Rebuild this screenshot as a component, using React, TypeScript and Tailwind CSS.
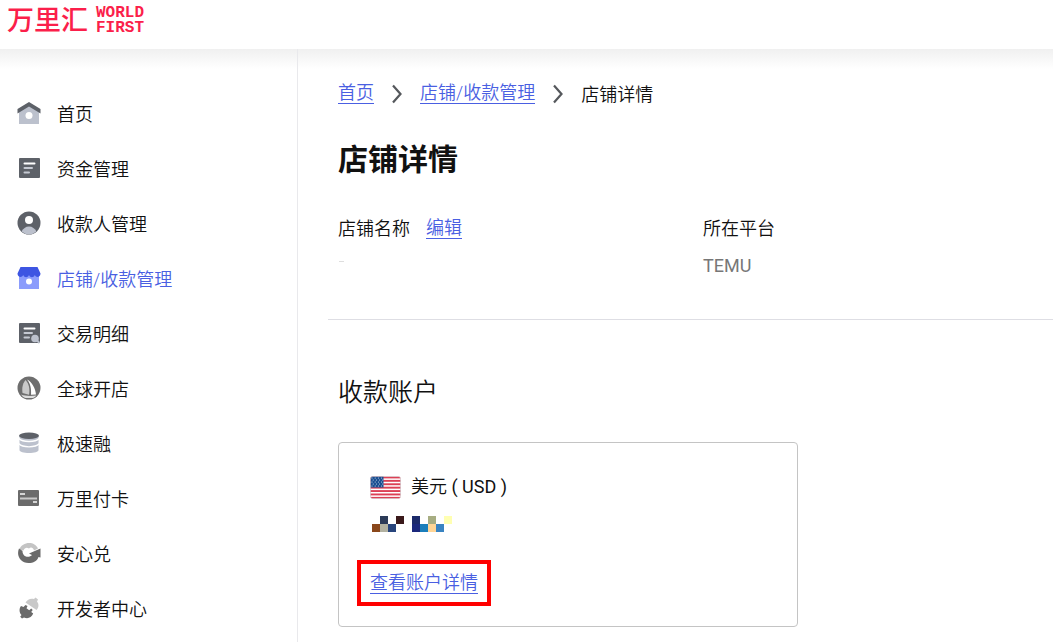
import type { ReactNode } from 'react';

type NavItem = { label: string; icon: ReactNode; active?: boolean };

function Icon({ children }: { children: ReactNode }) {
  return (
    <svg viewBox="0 0 24 24" className="mb-[3px] size-6 shrink-0" aria-hidden="true">
      {children}
    </svg>
  );
}

const navItems: NavItem[] = [
  {
    label: '首页',
    icon: (
      <Icon>
        <path d="M2 9.5 12 3l10 6.500V23H2Z" fill="#bcc1cd" />
        <path d="M12 1 .5 8v4.500L12 5.500l11.500 7V8Z" fill="#5d6168" />
        <circle cx="12" cy="14.500" r="3.500" fill="#fff" />
      </Icon>
    ),
  },
  {
    label: '资金管理',
    icon: (
      <Icon>
        <rect x="2" y="2" width="21" height="20" rx="1" fill="#5d6168" />
        <path d="M7.500 7.500h10" stroke="#fff" strokeWidth="2" strokeLinecap="round" />
        <path d="M7.500 12h7.500M7.500 16.500h4.500" stroke="#c5c9d2" strokeWidth="2" strokeLinecap="round" />
      </Icon>
    ),
  },
  {
    label: '收款人管理',
    icon: (
      <Icon>
        <circle cx="12" cy="12" r="11.500" fill="#5d6168" />
        <path d="M4.500 20.500c1.500-3 4.300-5 7.500-5s6 2 7.500 5a11.500 11.500 0 0 1-15 0Z" fill="#bcc1cd" />
        <circle cx="12" cy="9" r="4" fill="#fff" />
      </Icon>
    ),
  },
  {
    label: '店铺/收款管理',
    active: true,
    icon: (
      <Icon>
        <path d="M2 8h20v15H2Z" fill="#8b9cfc" />
        <path
          d="M3.500 1h17L23.500 7.500c0 4-4.500 4.500-5.700 1.500-1.300 3-4.500 3-5.800 0-1.300 3-4.500 3-5.800 0C5 12 .5 11.500.5 7.500Z"
          fill="#3d55e2"
        />
        <circle cx="12" cy="15.500" r="3" fill="#fff" />
      </Icon>
    ),
  },
  {
    label: '交易明细',
    icon: (
      <Icon>
        <rect x="2" y="2" width="21" height="20" rx="1" fill="#5d6168" />
        <path d="M7.500 7.500h10" stroke="#fff" strokeWidth="2" strokeLinecap="round" />
        <path d="M7.500 12h7.500M7.500 16.500h4.500" stroke="#c5c9d2" strokeWidth="2" strokeLinecap="round" />
        <circle cx="18" cy="17.500" r="3.800" fill="#bcc1cd" />
        <path d="m20 19.500 2.500 2.500" stroke="#bcc1cd" strokeWidth="2" />
      </Icon>
    ),
  },
  {
    label: '全球开店',
    icon: (
      <Icon>
        <circle cx="12" cy="12" r="11.500" fill="#6e6e6e" />
        <path d="M8.500 4C5 8.500 5 13 5.500 17l6.500 1.800C13 13 12 7.500 8.500 4Z" fill="#c9c9c9" />
        <path d="M10 3.500c5 2.500 8.500 9 9 15l-5 .3C14.500 13 13.500 7.500 10 3.500Z" fill="#fff" />
        <path d="M4 18.500c4 1.500 9 1.800 15.500 1-1 1.200-2 2-3.500 2.500H8.500C6.500 21.500 5 20 4 18.500Z" fill="#dcdcdc" />
      </Icon>
    ),
  },
  {
    label: '极速融',
    icon: (
      <Icon>
        <path d="M2.500 5v14c0 1.800 4.200 3 9.500 3s9.500-1.200 9.500-3V5Z" fill="#bcc1cd" />
        <path
          d="M2 7.500c2 2.300 5.500 3 10 3s8-.7 10-3M2 12.800c2 2.300 5.500 3 10 3s8-.7 10-3"
          fill="none"
          stroke="#fff"
          strokeWidth="1.300"
        />
        <ellipse cx="12" cy="4.700" rx="10" ry="3.200" fill="#5d6168" />
      </Icon>
    ),
  },
  {
    label: '万里付卡',
    icon: (
      <Icon>
        <rect x="1" y="4" width="21" height="16" rx="1" fill="#6b6b6b" />
        <path d="M3 8h5M16 16h4" stroke="#d5d5d5" strokeWidth="2" />
        <path d="M3 12.500h17" stroke="#c8c8c8" strokeWidth="2" />
      </Icon>
    ),
  },
  {
    label: '安心兑',
    icon: (
      <Icon>
        <path
          d="M2 9C4 4 8 2 12 2c4 0 7.500 2 9 5.500L17 9.500c-1-3.500-3.500-3.500-5-2-2-1.500-4.500-1-5.500 2Z"
          fill="#c4c4c4"
        />
        <path
          d="M2 7.500C-1 14.500 3.500 22 11.500 22c5 0 8.500-2 10-6l2 .5V7.500L12 12.500l3 1.500C12.500 17 5.500 16.500 5.500 10Z"
          fill="#6a6a6a"
        />
      </Icon>
    ),
  },
  {
    label: '开发者中心',
    icon: (
      <Icon>
        <path
          d="M8.500 6.500C10.500 3 14 2 17 3L18.500 1.500l2.500 2-1 2C22.500 8.500 21.500 12 19.500 14Z"
          fill="#c9c9c9"
        />
        <path
          d="m4 10 2.500 1 2-2 2 1-1 2.200 2.700 2 2-1.700 1.500 1.500-1.500 2 2 1.500c-1.700 4.500-5.700 5.500-9.200 4L5 22.500l-1.800-1.700L4.500 19C2 16.500 2 12.500 4 10Z"
          fill="#6a6a6a"
        />
      </Icon>
    ),
  },
];

const stars = [0, 1, 2, 3, 4].flatMap((row) =>
  [0, 1, 2, 3].map((col) => ({ x: 2 + col * 3.2 + (row % 2) * 1.2, y: 2 + row * 2 })),
);

function UsFlag() {
  return (
    <svg viewBox="0 0 31 23" className="h-[23px] w-[31px] shrink-0" role="img" aria-label="USD">
      <clipPath id="flag">
        <rect x=".5" y=".5" width="30" height="22" rx="2" />
      </clipPath>
      <g clipPath="url(#flag)">
        <rect width="31" height="23" fill="#fff" />
        {[0, 1, 2, 3, 4, 5, 6].map((i) => (
          <rect key={i} y={0.5 + i * 3.4} width="31" height="1.900" fill="#dc4055" />
        ))}
        <rect width="13.500" height="11.500" fill="#1b4f91" />
        {stars.map((s) => (
          <circle key={`${s.x}-${s.y}`} cx={s.x} cy={s.y} r=".55" fill="#d8e4f2" />
        ))}
      </g>
      <rect x=".5" y=".5" width="30" height="22" rx="2" fill="none" stroke="#c9b9bd" strokeWidth=".6" />
    </svg>
  );
}

const mosaic: [number, number, string][] = [
  [1, 0, '#2c3b58'],
  [3, 0, '#3a191b'],
  [0, 1, '#8a471b'],
  [1, 1, '#b2b1a0'],
  [2, 1, '#28457c'],
  [5, 0, '#1c2a6a'],
  [5, 1, '#1b287c'],
  [6, 1, '#1b7ebb'],
  [7, 0, '#a7ad82'],
  [7, 1, '#ffd596'],
  [8, 1, '#3983c1'],
  [9, 0, '#ffffb2'],
];

function Mosaic() {
  return (
    <svg viewBox="0 0 80 16" className="ml-0.5 h-4 w-20" aria-hidden="true" shapeRendering="crispEdges">
      {mosaic.map(([x, y, fill]) => (
        <rect key={`${x}-${y}`} x={x * 8} y={y * 8} width="8" height="8" fill={fill} />
      ))}
    </svg>
  );
}

function TextLink({ children }: { children: ReactNode }) {
  return (
    <a href="#" className="inline-block border-b border-[#4a5fe2] text-lg leading-[21px] text-[#4a5fe2]">
      {children}
    </a>
  );
}

function Chevron() {
  return (
    <svg viewBox="0 0 12 20" className="mt-0.5 h-5 w-3 shrink-0" aria-hidden="true">
      <path d="m2 1.500 7.500 8.500L2 18.500" fill="none" stroke="#55585c" strokeWidth="2.200" />
    </svg>
  );
}

export default function App() {
  return (
    <div className="flex min-h-screen flex-col bg-white font-['Roboto','Noto_Sans_CJK_SC',sans-serif] text-lg font-[350] text-[#111]">
      <header className="flex h-[49px] items-start px-[7px] pt-[5px] text-[#fb1f4b]">
        <a href="#" className="flex items-center gap-2">
          <span className="text-[27px] leading-8 font-medium">万里汇</span>
          <span className="flex flex-col font-['Liberation_Mono',monospace] text-base leading-[15px] font-bold">
            <span>WORLD</span>
            <span>FIRST</span>
          </span>
        </a>
      </header>

      <div className="flex grow bg-linear-to-b from-[#f0f0f0] to-white to-[20px]">
        <nav className="w-[298px] shrink-0 border-r border-[#e9e9ec] pt-[38px]">
          <ul>
            {navItems.map((item) => (
              <li key={item.label}>
                <a
                  href="#"
                  aria-current={item.active ? 'page' : undefined}
                  className={`flex h-[55px] items-center gap-4 pl-[17px] ${item.active ? 'text-[#4a5fe2]' : ''}`}
                >
                  {item.icon}
                  <span>{item.label}</span>
                </a>
              </li>
            ))}
          </ul>
        </nav>

        <main className="min-w-0 grow pl-[30px]">
          <div className="pt-[33px] pl-2.5">
            <nav aria-label="面包屑" className="flex items-start gap-[17px]">
              <TextLink>首页</TextLink>
              <Chevron />
              <TextLink>店铺/收款管理</TextLink>
              <Chevron />
              <span className="leading-[26px]">店铺详情</span>
            </nav>
            <h1 className="mt-8 text-[30px] leading-10 font-bold">店铺详情</h1>
            <dl className="mt-[37px] grid grid-cols-[365px_1fr]">
              <div>
                <dt className="flex items-start gap-4 leading-6">
                  店铺名称
                  <TextLink>编辑</TextLink>
                </dt>
                <dd className="mt-3 text-[#c8c8c8]">
                  <svg viewBox="0 0 8 24" className="h-6 w-2" aria-hidden="true">
                    <path d="M1 8.500h5" stroke="currentColor" strokeWidth=".6" />
                  </svg>
                </dd>
              </div>
              <div>
                <dt className="leading-6">所在平台</dt>
                <dd className="mt-3 leading-[26px] font-normal text-[#777]">TEMU</dd>
              </div>
            </dl>
          </div>

          <hr className="mt-10 border-[#dedee4]" />

          <section className="pt-[53px] pr-4 pb-3.5 pl-2.5">
            <h2 className="text-[25px] leading-10">收款账户</h2>
            <div className="mt-[29px] max-w-[460px] rounded border border-[#c4c4c4] px-[31px] pt-[30px] pb-8">
              <div className="flex items-center gap-2.5 leading-7">
                <UsFlag />
                <span>
                  美元 <span className="font-normal">( USD )</span>
                </span>
              </div>
              <div className="mt-[15px]">
                <Mosaic />
              </div>
              <div className="relative mt-10 flex w-fit">
                <TextLink>查看账户详情</TextLink>
                <span className="pointer-events-none absolute -inset-x-[13px] -inset-y-3 border-4 border-[#ff0000]" />
              </div>
            </div>
          </section>
        </main>
      </div>
    </div>
  );
}
